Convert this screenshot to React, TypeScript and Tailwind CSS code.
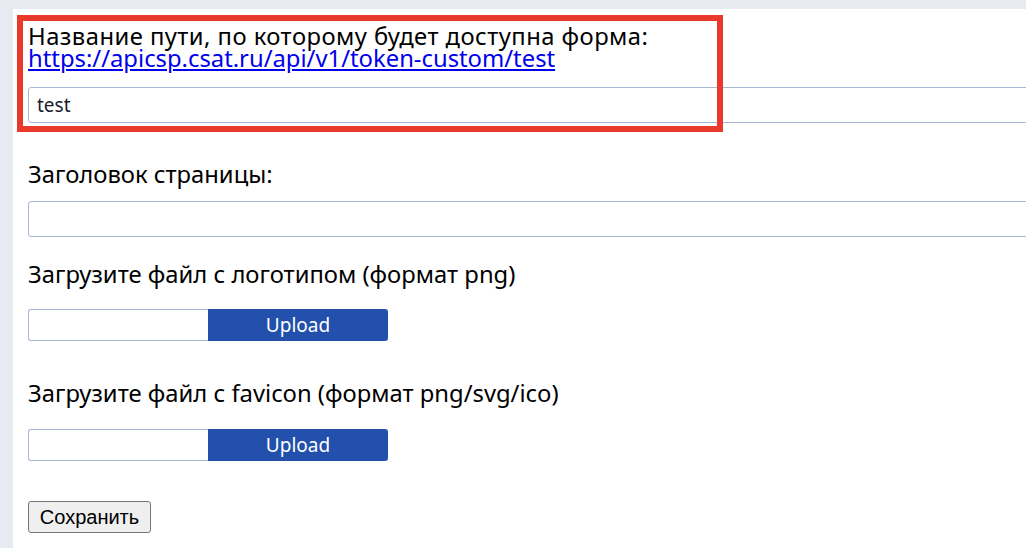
import React from 'react';

function UploadField() {
  return (
    <div className="flex h-[32px] w-[360px]">
      <div className="w-[180px] rounded-l-[3px] border-y border-l border-[#a9b6d6] bg-white" />
      <button className="w-[180px] rounded-r-[3px] bg-[#2350ad] text-[19px] text-white">Upload</button>
    </div>
  );
}

export default function App() {
  return (
    <div
      className="min-h-screen overflow-hidden bg-[#e8eaf2] pl-[13px] pt-[9px]"
      style={{ fontFamily: '"Noto Sans", "Open Sans", sans-serif' }}
    >
      <div className="relative min-h-[560px] bg-white pl-[15px] pt-[16px] text-[23.8px] leading-[22px] text-black">
        {/* path block */}
        <div>
          <div className="tracking-[0.45px]">Название пути, по которому будет доступна форма:</div>
          <a href="#" className="text-[#0000ee] underline">
            https://apicsp.csat.ru/api/v1/token-custom/test
          </a>
        </div>
        <input
          className="mt-[18px] block h-[36px] w-[1020px] rounded-[3px] border border-[#a9b6d6] px-[8px] text-[19px] text-[#1b1d30] outline-none"
          defaultValue="test"
        />

        <div className="mt-[40px]">Заголовок страницы:</div>
        <input className="mt-[16px] block h-[36px] w-[1020px] rounded-[3px] border border-[#a9b6d6] px-[8px] text-[19px] outline-none" />

        <div className="mt-[26px]">Загрузите файл с логотипом (формат png)</div>
        <div className="mt-[24px]">
          <UploadField />
        </div>

        <div className="mt-[41px]">Загрузите файл с favicon (формат png/svg/ico)</div>
        <div className="mt-[25px]">
          <UploadField />
        </div>

        <button
          className="mt-[40px] block h-[32px] w-[123px] rounded-[3px] border border-[#767676] bg-[#efefef] text-[20px] text-black"
          style={{ fontFamily: '"Liberation Sans", Arial, sans-serif' }}
        >
          Сохранить
        </button>

        {/* annotation frame */}
        <div className="pointer-events-none absolute left-[4px] top-[6px] h-[117px] w-[706px] border-[6px] border-[#e8392b]" />
      </div>
    </div>
  );
}
